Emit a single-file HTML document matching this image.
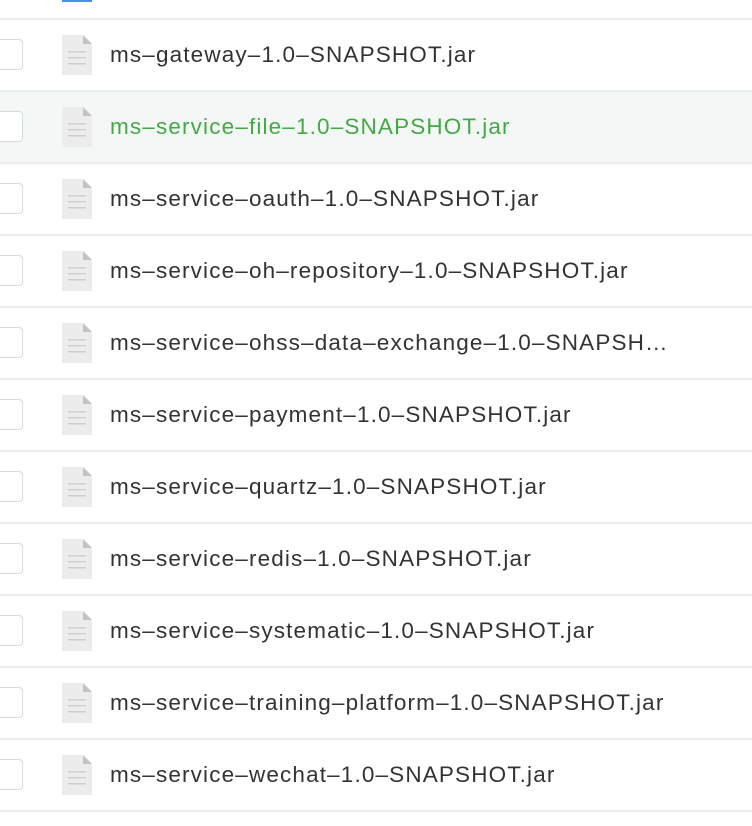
<!DOCTYPE html>
<html><head><meta charset="utf-8"><style>
body{margin:0;width:752px;height:826px;background:#fff;overflow:hidden;font-family:"Liberation Sans",Arial,sans-serif;position:relative}
.top{position:absolute;left:62px;top:0;width:30px;height:2px;background:#4a90e2}
.sep{position:absolute;left:0;width:752px;height:2px;background:#ececec}
.row{position:absolute;left:0;width:752px;height:70px}
.cb{position:absolute;left:-10px;top:19px;width:31px;height:29px;border:1.5px solid #d9d9d9;border-radius:4px;background:#fff}
.ic{position:absolute;left:62px;top:15px}
.t{position:absolute;left:110px;top:22px;font-size:22.5px;color:#333;white-space:nowrap;letter-spacing:1.15px}
.hl{background:#f3f8f6}
.hl .t{color:#45a845}
</style></head><body>
<div class="top"></div>
<script>
const names=["ms-gateway-1.0-SNAPSHOT.jar","ms-service-file-1.0-SNAPSHOT.jar","ms-service-oauth-1.0-SNAPSHOT.jar","ms-service-oh-repository-1.0-SNAPSHOT.jar","ms-service-ohss-data-exchange-1.0-SNAPSH…","ms-service-payment-1.0-SNAPSHOT.jar","ms-service-quartz-1.0-SNAPSHOT.jar","ms-service-redis-1.0-SNAPSHOT.jar","ms-service-systematic-1.0-SNAPSHOT.jar","ms-service-training-platform-1.0-SNAPSHOT.jar","ms-service-wechat-1.0-SNAPSHOT.jar"];
let h='';
const icon='<svg class="ic" width="30" height="40" viewBox="0 0 30 40"><path d="M0 0H21L30 9V40H0Z" fill="#ececec"/><path d="M21 0V9H30Z" fill="#c4c4c4"/><rect x="6" y="16" width="18" height="1.5" fill="#cfcfcf"/><rect x="6" y="22" width="18" height="1.5" fill="#cfcfcf"/><rect x="6" y="28" width="18" height="1.5" fill="#cfcfcf"/></svg>';
names.forEach((n,i)=>{const y=18+i*72;h+='<div class="sep" style="top:'+y+'px"></div><div class="row'+(i==1?' hl':'')+'" style="top:'+(y+2)+'px"><div class="cb"></div>'+icon+'<div class="t">'+n.replace(/-/g,'–')+'</div></div>';});
h+='<div class="sep" style="top:810px"></div>';
document.write(h);
</script>
</body></html>
